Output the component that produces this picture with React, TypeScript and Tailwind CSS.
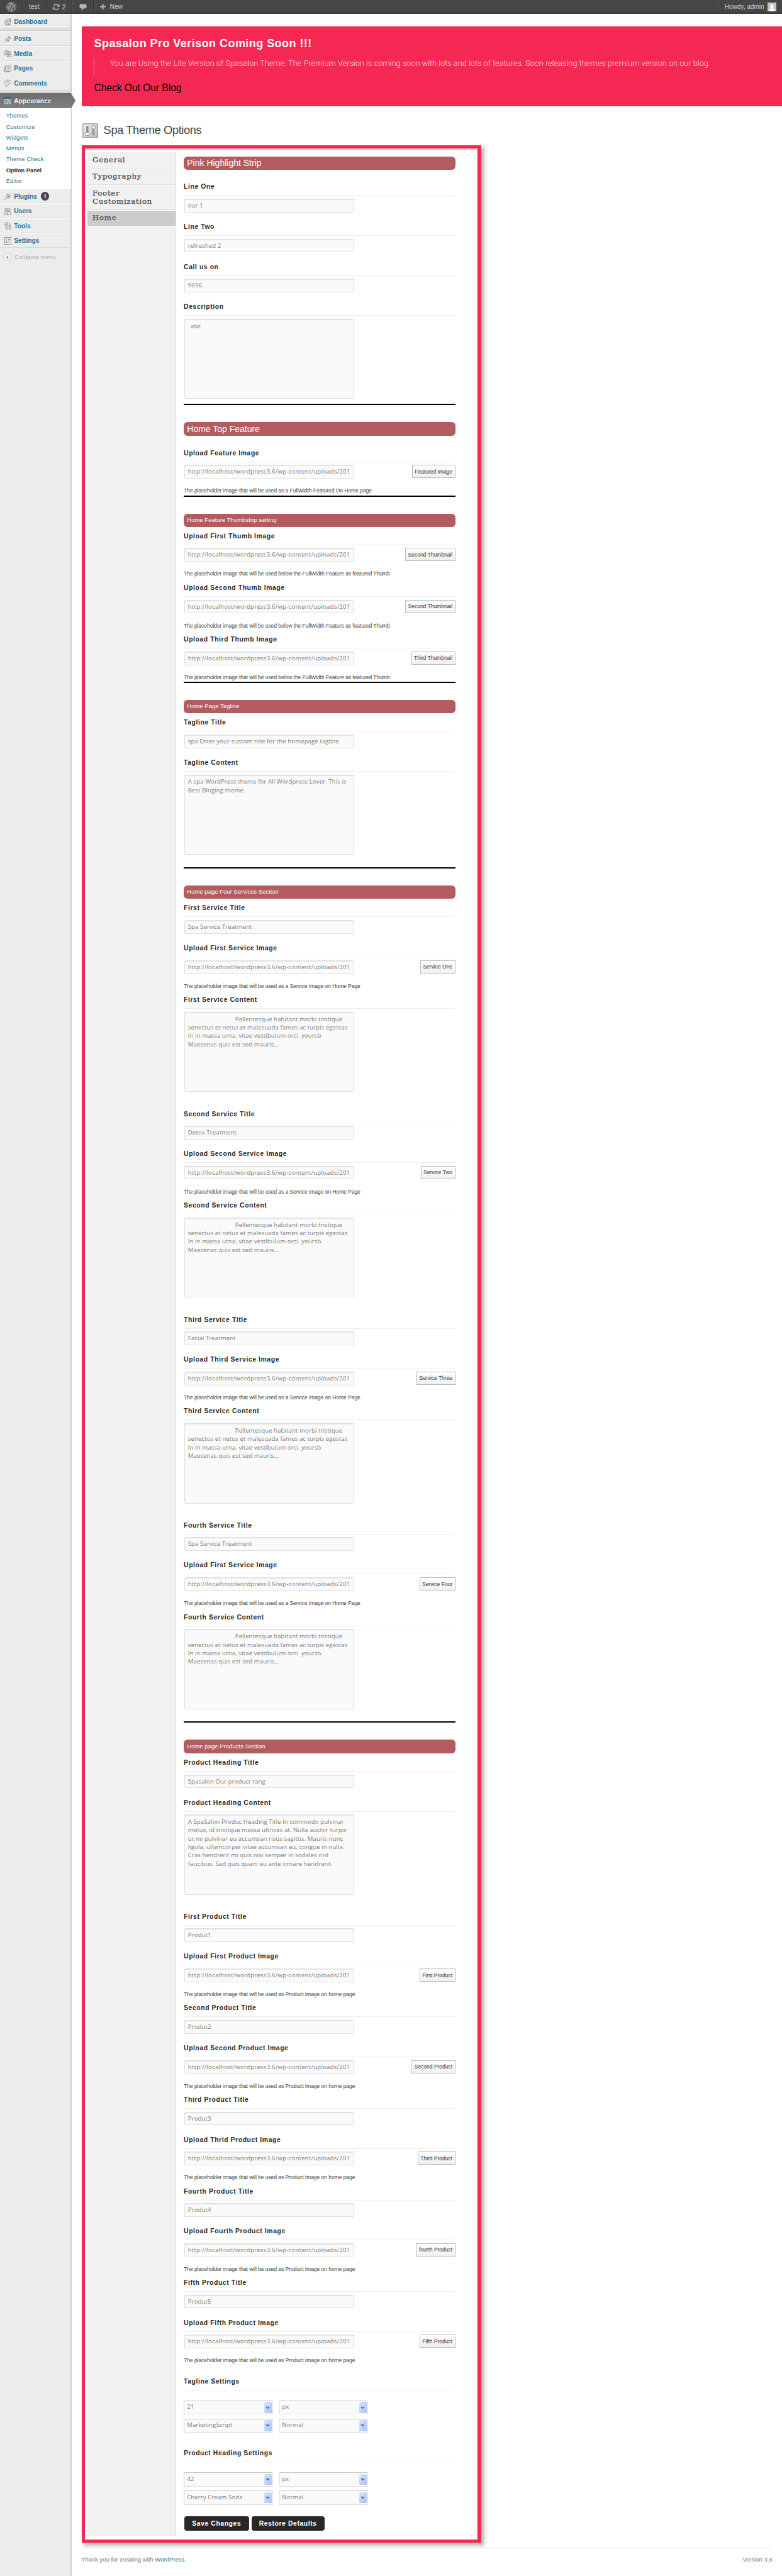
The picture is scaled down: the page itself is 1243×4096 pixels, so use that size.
import type { ReactNode } from "react";

const URL_VALUE = "http://localhost/wordpress3.6/wp-content/uploads/201";
const THUMB_NOTE = "The placeholder image that will be used below the FullWidth Feature as featured Thumb";
const SERVICE_NOTE = "The placeholder image that will be used as a Service Image on Home Page";
const PRODUCT_NOTE = "The placeholder image that will be used as Product Image on home page";

const box =
  "ml-[0.7px] w-[270px] rounded-[2px] border border-[#dfdfdf] bg-[#fafafa] font-['Open_Sans',sans-serif] text-[9.6px] text-[#7c7c7c] shadow-[inset_0_1px_1px_#e4e4e4]";

function Label({ children }: { children: ReactNode }) {
  return (
    <div className="h-[22px] border-b border-[#eeeeee] text-[10.4px] leading-[15px] font-bold tracking-[0.58px] whitespace-nowrap text-[#2a2a2a]">
      {children}
    </div>
  );
}

function TextField({ label, value }: { label: string; value: string }) {
  return (
    <div className="h-[63.6px]">
      <Label>{label}</Label>
      <div className={`${box} mt-[4.6px] h-[21.7px] px-[5px] leading-[20.5px] tracking-[0.09px]`}>{value}</div>
    </div>
  );
}

function UploadField({ label, button, note, last }: { label: string; button: string; note: string; last?: boolean }) {
  return (
    <div className={last ? "h-[75px]" : "h-[82.2px]"}>
      <Label>{label}</Label>
      <div className="mt-[4.6px] flex h-[21.7px] items-start justify-between">
        <div className={`${box} h-[21.7px] overflow-hidden px-[5px] leading-[20.5px] tracking-[0.22px] whitespace-nowrap`}>
          {URL_VALUE}
        </div>
        <button className="h-[21px] border border-[#bbb] bg-gradient-to-b from-white to-[#f0f0f0] px-[3.5px] text-[8.6px] leading-[18px] tracking-[-0.06px] whitespace-nowrap text-[#333]">
          {button}
        </button>
      </div>
      <div className="mt-[13.3px] text-[8.6px] leading-[13px] tracking-[-0.09px] whitespace-nowrap text-[#444]">
        {note}
      </div>
    </div>
  );
}

function AreaField({ label, lines, tall, indent }: { label: string; lines: string[]; tall?: boolean; indent?: string }) {
  return (
    <div className={tall ? "h-[181.3px]" : "h-[162px]"}>
      <Label>{label}</Label>
      <div className={`${box} mt-[4.8px] h-[127.4px] px-[5px] pt-[3.8px] leading-[13.3px] tracking-[0.09px] whitespace-nowrap`}>
        {lines.map((line, i) => (
          <div key={line} className={i === 0 ? indent : undefined}>
            {line}
          </div>
        ))}
      </div>
    </div>
  );
}

function Section({
  title,
  height,
  big,
  gap,
  rule = true,
  ruleGap,
  children,
}: {
  title: string;
  height: string;
  big?: boolean;
  gap: string;
  rule?: boolean;
  ruleGap?: string;
  children: ReactNode;
}) {
  return (
    <section className={height}>
      <h3
        className={`flex h-[21.2px] items-center rounded-[6px] bg-[#b35c60] px-[5.2px] text-white ${
          big ? "text-[14px]" : "text-[9.4px] tracking-[0.09px]"
        }`}
      >
        {title}
      </h3>
      <div className={gap}>{children}</div>
      {rule && <div className={`h-[2px] bg-black ${ruleGap ?? ""}`} />}
    </section>
  );
}

function Select({ value }: { value: string }) {
  return (
    <div className="flex h-[22.4px] w-[142px] justify-between rounded-[2px] border border-[#dfdfdf] border-t-[#c8c8c8] border-l-[#c8c8c8] bg-[#fafafa] p-[1.5px] font-['Open_Sans',sans-serif] text-[9.6px] text-[#7c7c7c]">
      <span className="pl-[2.6px] leading-[15px] tracking-[0.1px]">{value}</span>
      <span className="flex h-full w-[12px] items-center justify-center rounded-[1.5px] bg-gradient-to-br from-[#dbe6fe] to-[#a9c2f6]">
        <svg viewBox="0 0 8 6" className="h-[5px] w-[7px]" fill="none" stroke="#44618f" strokeWidth="1.8">
          <path d="M1 1l3 3 3-3" />
        </svg>
      </span>
    </div>
  );
}

function SettingsGroup({ label, values, height }: { label: string; values: string[]; height: string }) {
  return (
    <div className={height}>
      <Label>{label}</Label>
      <div className="mt-[16.2px] grid w-[293px] grid-cols-2 gap-x-[9px] gap-y-[6.4px]">
        {values.map((v, i) => (
          <Select key={i} value={v} />
        ))}
      </div>
    </div>
  );
}

const svgProps = {
  viewBox: "0 0 16 16",
  className: "size-[12.5px] shrink-0",
  fill: "none",
  stroke: "#808080",
  strokeWidth: 1.1,
  strokeLinejoin: "round" as const,
  strokeLinecap: "round" as const,
};

const icons: Record<string, ReactNode> = {
  Dashboard: (
    <svg {...svgProps}>
      <path d="M1 8.5L8 2l7 6.5M3 7.5V15h10V7.5M11.5 5V2h2v5" />
      <path d="M6.5 15v-4.5h3V15M5.5 8h5M8 6v2" />
    </svg>
  ),
  Posts: (
    <svg {...svgProps}>
      <path d="M9.5 1.5l5 5-1.5.6-1-.3-2.5 2.7.3 3-1.3 1-5-5 1-1.3 3 .3L10 4.7l-.8-1.5zM5.500 10.500L1.500 14.500" fill="#ddd" />
    </svg>
  ),
  Media: (
    <svg {...svgProps}>
      <path d="M1 3h2l1-1.5h3L8 3h3.500v7H1z" fill="#ddd" />
      <circle cx="7" cy="6.4" r="2" />
      <path d="M12.500 5H15v8M9 9.500v4M9 10h6" />
      <circle cx="8" cy="13.7" r="1.2" />
      <circle cx="14" cy="13.7" r="1.2" />
    </svg>
  ),
  Pages: (
    <svg {...svgProps}>
      <path d="M4.500 4H1.500v11.300h9V13" fill="#ccc" />
      <path d="M4.500 1h10v12h-10z" fill="#f4f4f4" />
      <path d="M7 4h5M7 6h5M7 8h5M7 10h3" strokeWidth="0.9" />
    </svg>
  ),
  Comments: (
    <svg {...svgProps}>
      <path d="M8.500 1.500c4 0 6.500 2 6.500 4.500s-2.500 4.600-6 4.600c-.5 2-2.500 4-4.500 4.400.8-1.400 1-3 .6-4.800C3 9.500 1.500 8 1.500 6c0-2.500 3-4.500 7-4.500z" fill="#f6f6f6" />
      <ellipse cx="8.5" cy="5.8" rx="4" ry="2.4" fill="#c4c4c4" stroke="none" />
    </svg>
  ),
  Appearance: (
    <svg viewBox="0 0 16 16" className="size-[12.5px] shrink-0">
      <path d="M.7.7h14.600v14.600H.7z" fill="#f2f6f2" stroke="#3d5878" strokeWidth="1.4" />
      <path d="M1 1h14v3H1z" fill="#3d5878" />
      <path d="M3 6h3v2.500H3zM3 10h3v3H3z" fill="#b5dc85" stroke="#47713a" />
      <path d="M8 6h5v7H8z" fill="#adc1f5" stroke="#3c55a0" />
    </svg>
  ),
  Plugins: (
    <svg {...svgProps}>
      <path d="M14.500 1.500L11 5M15 5.500l-3 2.500M8 3l5 6.500c-1.500 2-4.500 3-6.500 1.500S5 5.500 8 3zM6 11l-2 1.500c-1 .5-1.500 2-3 2" fill="#ddd" />
      <path d="M8 6l2.500 3.500" />
    </svg>
  ),
  Users: (
    <svg {...svgProps}>
      <circle cx="5" cy="3.8" r="2.5" fill="#f0f0f0" />
      <path d="M1 13c0-4 1-6 4-6s4 1 4 3v4H2z" fill="#ddd" />
      <circle cx="11" cy="4.5" r="2.5" fill="#f0f0f0" />
      <path d="M7 15c0-4 1-7 4-7s4 3 4 5.500L13 15z" fill="#e4e4e4" />
    </svg>
  ),
  Tools: (
    <svg {...svgProps}>
      <path d="M1 4.500C1.500 2 3 1.500 8 1.500V4H6.500v11h-2V4.500H2.500zM12 1.500v5M11 7c-1 2-1 6 0 8h2.500c1-2 1-6 0-8z" fill="#e4e4e4" />
    </svg>
  ),
  Settings: (
    <svg {...svgProps}>
      <path d="M1 1h14v14H1z" fill="#f4f4f4" strokeWidth="1.4" />
      <path d="M5.500 4v5M10.500 7.500v5" />
      <circle cx="5.5" cy="10.5" r="1.5" />
      <circle cx="10.5" cy="5" r="1.5" />
    </svg>
  ),
};

function MenuItem({ name, badge }: { name: string; badge?: string }) {
  return (
    <li className="flex h-[23.6px] items-center gap-[4px] border-t border-b border-t-[#f9f9f9] border-b-[#dadada] pt-[1.2px] pl-[5.7px] text-[10.2px] font-bold text-[#21759b]">
      {icons[name]}
      <span>{name}</span>
      {badge && (
        <span className="ml-[2px] flex size-[13.5px] items-center justify-center rounded-full bg-[#464646] text-[8px] text-white">
          {badge}
        </span>
      )}
    </li>
  );
}

const menuGap = "h-[3.9px] border-b border-[#cfcfcf] bg-[#dfdfdf]";

function Sidebar() {
  return (
    <aside className="w-[114.3px] shrink-0 border-r border-[#ccc] bg-[#ececec] shadow-[inset_-3px_0_3px_-2px_#d4d4d4]">
      <ul>
        <MenuItem name="Dashboard" />
        <li className={menuGap} />
        <MenuItem name="Posts" />
        <MenuItem name="Media" />
        <MenuItem name="Pages" />
        <MenuItem name="Comments" />
        <li className={menuGap} />
        <li className="relative flex h-[23.9px] items-center gap-[4px] bg-gradient-to-b from-[#6d6d6d] to-[#808080] pt-[1px] pl-[5.7px] text-[10.2px] font-bold tracking-[0.13px] text-white [text-shadow:0_-1px_0_#333]">
          {icons.Appearance}
          <span>Appearance</span>
          <svg viewBox="0 0 7 24" preserveAspectRatio="none" className="absolute top-0 left-full h-full w-[7px]">
            <path d="M0 0L7 12 0 24z" fill="#777" />
          </svg>
        </li>
        <li className="h-[128.2px] bg-white pt-[3.6px] text-[9.4px] leading-[17.3px] text-[#21759b]">
          {["Themes", "Customize", "Widgets", "Menus", "Theme Check", "Option Panel", "Editor"].map((t) => (
            <div
              key={t}
              className={
                t === "Option Panel" ? "pl-[9.7px] font-bold tracking-[-0.12px] text-[#333]" : "pl-[9.7px] tracking-[0.15px]"
              }
            >
              {t}
            </div>
          ))}
        </li>
        <MenuItem name="Plugins" badge="1" />
        <MenuItem name="Users" />
        <MenuItem name="Tools" />
        <MenuItem name="Settings" />
        <li className="flex h-[29px] items-center gap-[5px] pl-[5px] text-[9.4px] tracking-[0.25px] text-[#aaa]">
          <span className="flex size-[13px] items-center justify-center rounded-full border border-[#ccc] bg-[#f4f4f4]">
            <svg viewBox="0 0 6 8" className="h-[6px] w-[4.5px]">
              <path d="M5.500 0v8L0 4z" fill="#aaa" />
            </svg>
          </span>
          Collapse menu
        </li>
      </ul>
    </aside>
  );
}

function AdminBar() {
  const cell = "flex h-full items-center border-r border-[#333] shadow-[1px_0_0_#555]";
  return (
    <header className="flex h-[22px] items-center bg-gradient-to-b from-[#464646] from-80% to-[#3a3a3a] text-[10.2px] text-[#ccc]">
      <div className={`${cell} w-[36.3px] pl-[10px]`}>
        <svg viewBox="0 0 20 20" className="size-[16px]" fill="none" stroke="#a9a9a9">
          <circle cx="10" cy="10" r="9.2" strokeWidth="1.2" />
          <circle cx="10" cy="10" r="7.6" fill="#a9a9a9" stroke="none" />
          <path d="M2.800 6.500h3.800M4.500 6.500l3.300 9.500 2.400-7-1-2.500M8 6.500h4.200M10.200 6.500l3.300 9.500 2-6c.6-2-1-3.300-.5-5" stroke="#464646" strokeWidth="1.5" />
        </svg>
      </div>
      <div className={`${cell} w-[37.5px] pl-[9.8px]`}>test</div>
      <div className={`${cell} w-[41.7px] gap-[3px] pl-[9.3px]`}>
        <svg viewBox="0 0 16 16" className="size-[12.5px]" fill="none" stroke="#a9a9a9" strokeWidth="2.2">
          <path d="M3 6.500A5.400 5.400 0 0 1 12.500 5M13 9.500A5.400 5.400 0 0 1 3.500 11" />
          <path d="M15 2v5.500H9.500zM1 14V8.500h5.500z" fill="#a9a9a9" stroke="none" />
        </svg>
        <span className="text-[11px]">2</span>
      </div>
      <div className={`${cell} w-[33.1px] pl-[10.5px]`}>
        <svg viewBox="0 0 16 16" className="size-[12px]" fill="#b4b4b4">
          <path d="M4 2h8c2 0 3.500 1.200 3.500 3.500v2C15.500 9.800 14 11 12 11h-2l-5 4.500V11H4C2 11 .5 9.800.5 7.500v-2C.5 3.200 2 2 4 2z" />
        </svg>
      </div>
      <div className="flex items-center gap-[6.5px] pl-[10.5px]">
        <svg viewBox="0 0 12 12" className="size-[9px]" stroke="#b4b4b4" strokeWidth="3">
          <path d="M6 0v12M0 6h12" />
        </svg>
        New
      </div>
      <div className="ml-auto flex h-full w-[102.3px] items-center gap-[5px] border-l border-[#555] pl-[10px]">
        <span className="tracking-[-0.07px] whitespace-nowrap">Howdy, admin</span>
        <svg viewBox="0 0 16 16" className="size-[14px]">
          <path d="M0 0h16v16H0z" fill="#c4c4c4" />
          <path d="M3 16c0-3 1-4.500 3-5.500C4.500 8 4.800 3.200 8 3.200S11.500 8 10 10.500c2 1 3 2.500 3 5.500z" fill="#fff" />
        </svg>
      </div>
    </header>
  );
}

const tab =
  "flex items-center border-b border-[#dfdfdf] pl-[8px] font-['DejaVu_Serif',serif] text-[11.7px] leading-[13.3px] tracking-[0.75px] text-[#484848] shadow-[0_1px_0_white] [-webkit-text-stroke:0.25px_#484848]";

function HomeOptions() {
  const products: [string, string, string][] = [
    ["First", "First", "First Product"],
    ["Second", "Second", "Second Product"],
    ["Third", "Thrid", "Third Product"],
    ["Fourth", "Fourth", "fourth Product"],
    ["Fifth", "Fifth", "Fifth Product"],
  ];
  const services: [string, string, string, string][] = [
    ["First", "First", "Spa Service Treatment", "Service One"],
    ["Second", "Second", "Detox Treatment", "Service Two"],
    ["Third", "Third", "Facial Treatment", "Service Three"],
    ["Fourth", "First", "Spa Service Treatment", "Service Four"],
  ];
  return (
    <div className="w-[431.5px] pt-[7px]">
      <Section title="Pink Highlight Strip" height="h-[422.5px]" big gap="pt-[19.2px]">
        <TextField label="Line One" value="our 1" />
        <TextField label="Line Two" value="refreshed 2" />
        <TextField label="Call us on" value="9696" />
        <AreaField label="Description" lines={["abc"]} indent="pl-[4px]" />
      </Section>
      <Section title="Home Top Feature" height="h-[145.2px]" big gap="pt-[20px]">
        <UploadField
          label="Upload Feature Image"
          button="Featured Image"
          note="The placeholder image that will be used as a FullWidth Featured On Home page"
          last
        />
      </Section>
      <Section title="Home Feature Thumbstrip setting" height="h-[296.1px]" gap="pt-[7px]">
        <UploadField label="Upload First Thumb Image" button="Second Thumbnail" note={THUMB_NOTE} />
        <UploadField label="Upload Second Thumb Image" button="Second Thumbnail" note={THUMB_NOTE} />
        <UploadField label="Upload Third Thumb Image" button="Third Thumbnail" note={THUMB_NOTE} last />
      </Section>
      <Section title="Home Page Tegline" height="h-[295.2px]" gap="pt-[7.3px]" ruleGap="mt-[12px]">
        <TextField label="Tagline Title" value="spa Enter your custom title for the homepage tagline" />
        <AreaField
          label="Tagline Content"
          lines={["A spa WordPress theme for All Wordpress Lover. This is", "Best Bloging theme."]}
        />
      </Section>
      <Section title="Home page Four Services Section" height="h-[1358.4px]" gap="h-[1308.2px] pt-[7.2px]">
        {services.map(([name, upload, value, button]) => (
          <div key={name} className="h-[327.2px]">
            <TextField label={`${name} Service Title`} value={value} />
            <UploadField label={`Upload ${upload} Service Image`} button={button} note={SERVICE_NOTE} />
            <AreaField
              label={`${name} Service Content`}
              indent="pl-[75px]"
              lines={[
                "Pellentesque habitant morbi tristique",
                "senectus et netus et malesuada fames ac turpis egestas",
                "In in massa urna, vitae vestibulum orci. yoursb",
                "Maecenas quis est sed mauris...",
              ]}
            />
          </div>
        ))}
      </Section>
      <Section title="Home page Products Section" height="h-[1234.4px]" gap="pt-[7.4px]" rule={false}>
        <TextField label="Product Heading Title" value="Spasalon Our product rang" />
        <AreaField
          label="Product Heading Content"
          tall
          lines={[
            "A SpaSalon Produc Heading Title In commodo pulvinar",
            "metus, id tristique massa ultrices at. Nulla auctor turpis",
            "ut mi pulvinar eu accumsan risus sagittis. Mauris nunc",
            "ligula, ullamcorper vitae accumsan eu, congue in nulla.",
            "Cras hendrerit mi quis nisi semper in sodales nisl",
            "faucibus. Sed quis quam eu ante ornare hendrerit.",
          ]}
        />
        {products.map(([name, upload, button], i) => (
          <div key={name} className="h-[145.6px]">
            <TextField label={`${name} Product Title`} value={`Produt${i + 1}`} />
            <UploadField label={`Upload ${upload} Product Image`} button={button} note={PRODUCT_NOTE} />
          </div>
        ))}
        <div className="h-[11px]" />
        <SettingsGroup label="Tagline Settings" values={["21", "px", "MarketingScript", "Normal"]} height="h-[114.5px]" />
        <SettingsGroup label="Product Heading Settings" values={["42", "px", "Cherry Cream Soda", "Normal"]} height="h-[100px]" />
      </Section>
      <div className="ml-[0.7px] flex gap-[3.9px] text-[10.4px] font-bold tracking-[0.58px] text-white">
        <button className="h-[23.3px] w-[103px] rounded-[4px] bg-[#2b2728]">Save Changes</button>
        <button className="h-[23.3px] w-[116px] rounded-[4px] bg-[#2b2728]">Restore Defaults</button>
      </div>
    </div>
  );
}

export default function App() {
  return (
    <div className="flex h-[4096px] w-[1243px] flex-col overflow-hidden bg-white font-['Liberation_Sans',Arial,sans-serif]">
      <AdminBar />
      <div className="flex min-h-0 flex-1">
        <Sidebar />
        <main className="min-w-0 flex-1 pl-[15.3px]">
          <section className="mt-[19.6px] h-[127px] bg-[#f42853] pt-[17.9px] pl-[19.9px]">
            <h2 className="text-[18px] leading-[20px] font-bold tracking-[0.45px] text-white">
              Spasalon Pro Verison Coming Soon !!!
            </h2>
            <blockquote className="mt-[13.9px] h-[27.5px] border-l border-[#f9899f] pl-[24px] font-['Roboto',sans-serif] text-[13px] leading-[16px] font-light tracking-[-0.108px] whitespace-nowrap text-[#ffdbe2]">
              You are Using the Lite Version of Spasalon Theme. The Premium Version is coming soon with lots and lots of
              features. Soon releasing themes premium version on our blog
            </blockquote>
            <p className="mt-[9px] text-[15.7px] leading-[20px] tracking-[-0.08px] text-black">Check Out Our Blog</p>
          </section>
          <div className="mt-[27px] flex h-[23.5px] items-center pl-[1.5px]">
            <svg viewBox="0 0 32 30" className="h-[23.5px] w-[25.2px]">
              <defs>
                <linearGradient id="opt" x1="0" y1="0" x2="1" y2="1">
                  <stop offset="0" stopColor="#f2f2f2" />
                  <stop offset="1" stopColor="#bcbcbc" />
                </linearGradient>
              </defs>
              <rect x="1" y="1" width="30" height="28" rx="1.5" fill="url(#opt)" stroke="#8b8b8b" strokeWidth="1.5" />
              <rect x="8.5" y="6" width="3" height="13" fill="#999" stroke="#777" strokeWidth="0.8" />
              <rect x="20.5" y="11" width="3" height="13" fill="#999" stroke="#777" strokeWidth="0.8" />
              <rect x="7" y="18.5" width="6.5" height="6.5" rx="1" fill="#fafafa" stroke="#777" />
              <rect x="19" y="5" width="6.5" height="6.5" rx="1" fill="#fafafa" stroke="#777" />
            </svg>
            <h1 className="pb-[1px] pl-[8.3px] text-[18.3px] leading-[22px] tracking-[-0.38px] text-[#464646]">Spa Theme Options</h1>
          </div>
          <div className="mt-[11.8px] w-[635.2px] bg-[#f42853] p-[5.5px] shadow-[4px_4px_5px_1px_#bbb]">
            <div className="flex h-[3801.3px] bg-white pt-[5.6px] pb-[4.5px] pl-[4px] shadow-[inset_0_2px_2px_#f3b4bf]">
              <nav className="w-[141.3px] shrink-0 border-r border-[#dfdfdf] bg-[#f1f1f1]">
                <div className={`${tab} h-[25.7px]`}>General</div>
                <div className={`${tab} mt-px h-[25.2px]`}>Typography</div>
                <div className={`${tab} mt-px h-[39.2px]`}>
                  Footer
                  <br />
                  Customization
                </div>
                <div className={`${tab} mt-px h-[25.2px] bg-[#cccccc]`}>Home</div>
              </nav>
              <div className="pl-[11.7px]">
                <HomeOptions />
              </div>
            </div>
          </div>
          <footer className="mt-[8.2px] mr-[15.3px] flex justify-between border-t border-[#dfdfdf] pt-[8.2px] text-[9.4px] leading-[18px] tracking-[0.06px] text-[#777]">
            <span>
              Thank you for creating with <span className="text-[#21759b]">WordPress.</span>
            </span>
            <span>Version 3.6</span>
          </footer>
        </main>
      </div>
    </div>
  );
}
